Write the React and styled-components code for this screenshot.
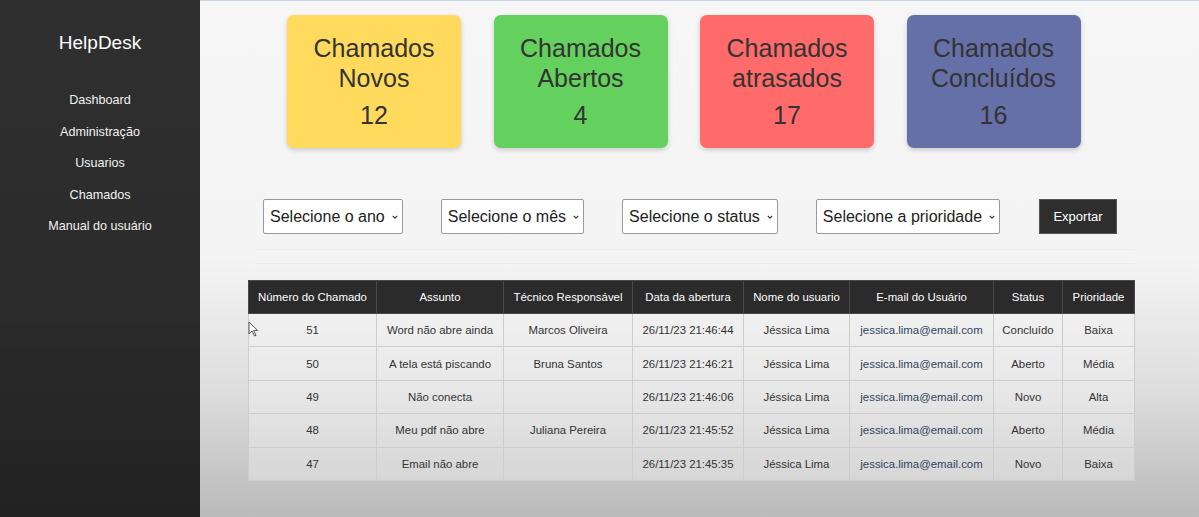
import styled, { createGlobalStyle } from 'styled-components';

const GlobalStyle = createGlobalStyle`
  html, body {
    margin: 0;
    padding: 0;
    height: 100%;
    overflow: hidden;
  }
  body {
    font-family: "Liberation Sans", Arial, sans-serif;
  }
  #root {
    height: 100%;
  }
`;

const Layout = styled.div`
  display: flex;
  height: 517px;
  width: 1199px;
`;

const Sidebar = styled.aside`
  width: 200px;
  flex-shrink: 0;
  background: linear-gradient(#2f2f2f, #2b2b2b 60%, #222222);
  display: flex;
  flex-direction: column;
  align-items: center;
  padding-top: 31px;
  box-sizing: border-box;
`;

const Brand = styled.div`
  color: #ffffff;
  font-size: 19px;
  line-height: 24px;
  margin-bottom: 37px;
`;

const Nav = styled.nav`
  display: flex;
  flex-direction: column;
  align-items: center;
  gap: 14px;
`;

const NavLink = styled.a`
  color: #f2f2f2;
  font-size: 12.6px;
  line-height: 17.5px;
  text-decoration: none;
`;

const Main = styled.main`
  flex: 1;
  position: relative;
  border-top: 1px solid #c9d5e6;
  background: linear-gradient(#f6f6f6 0%, #f4f4f4 50%, #dedede 75%, #bababa 100%);
  box-sizing: border-box;
  display: flex;
  flex-direction: column;
`;

const Cards = styled.div`
  display: flex;
  gap: 32.5px;
  padding: 14px 0 0 87px;
`;

const Card = styled.div`
  width: 174px;
  height: 133px;
  border-radius: 7px;
  background: ${(p) => p.$color};
  box-shadow: 0 2px 5px rgba(0, 0, 0, 0.18);
  color: #333333;
  display: flex;
  flex-direction: column;
  align-items: center;
  padding-top: 18px;
  box-sizing: border-box;
  text-align: center;
`;

const CardTitle = styled.div`
  font-size: 25px;
  line-height: 30px;
`;

const CardCount = styled.div`
  font-size: 25px;
  line-height: 30px;
  margin-top: 7px;
`;

const Filters = styled.div`
  display: flex;
  align-items: center;
  gap: 38px;
  padding: 51px 0 0 63px;
`;

const SelectBox = styled.div`
  height: 35px;
  box-sizing: border-box;
  border: 1px solid #9a9a9a;
  border-radius: 2px;
  background: #ffffff;
  display: flex;
  align-items: center;
  gap: 7px;
  padding: 0 4px 0 6px;
  font-size: 16px;
  color: #222222;
`;

const Chevron = styled.svg`
  width: 6px;
  height: 6px;
  margin-top: 1px;
`;

const ExportButton = styled.button`
  height: 35px;
  width: 78px;
  margin-left: 1px;
  border: 1px solid #555;
  background: #2e2e2e;
  color: #ffffff;
  font-family: inherit;
  font-size: 13px;
  padding: 0;
`;

const Divider = styled.div`
  margin: 15px 64px 0 55px;
  height: 13px;
  border-top: 1px solid rgba(0, 0, 0, 0.03);
  border-bottom: 1px solid rgba(0, 0, 0, 0.035);
`;

const Table = styled.table`
  margin: 16px 0 0 48px;
  border-collapse: collapse;
  table-layout: fixed;
  width: 886px;
  font-size: 11.4px;
`;

const Th = styled.th`
  background: #2b2b2b;
  color: #ffffff;
  font-weight: normal;
  height: 32px;
  padding: 0;
  border: 1px solid #4a4a4a;
  text-align: center;
`;

const Td = styled.td`
  height: 32.4px;
  padding: 0;
  border: 1px solid #cdcdcd;
  text-align: center;
  color: ${(p) => (p.$link ? '#2f4560' : '#333333')};
  background: rgba(255, 255, 255, 0.3);
`;

const Cursor = styled.svg`
  position: absolute;
  left: 48px;
  top: 320px;
  width: 11px;
  height: 16px;
`;

const stats = [
  { title: ['Chamados', 'Novos'], count: 12, color: '#ffda5c' },
  { title: ['Chamados', 'Abertos'], count: 4, color: '#64d05d' },
  { title: ['Chamados', 'atrasados'], count: 17, color: '#ff6a6a' },
  { title: ['Chamados', 'Concluídos'], count: 16, color: '#6670a8' },
];

const selects = [
  'Selecione o ano',
  'Selecione o mês',
  'Selecione o status',
  'Selecione a prioridade',
];

const columns = [
  { label: 'Número do Chamado', width: 128 },
  { label: 'Assunto', width: 127 },
  { label: 'Técnico Responsável', width: 129 },
  { label: 'Data da abertura', width: 111 },
  { label: 'Nome do usuario', width: 106 },
  { label: 'E-mail do Usuário', width: 144 },
  { label: 'Status', width: 69 },
  { label: 'Prioridade', width: 72 },
];

const tickets = [
  [51, 'Word não abre ainda', 'Marcos Oliveira', '26/11/23 21:46:44', 'Concluído', 'Baixa'],
  [50, 'A tela está piscando', 'Bruna Santos', '26/11/23 21:46:21', 'Aberto', 'Média'],
  [49, 'Não conecta', '', '26/11/23 21:46:06', 'Novo', 'Alta'],
  [48, 'Meu pdf não abre', 'Juliana Pereira', '26/11/23 21:45:52', 'Aberto', 'Média'],
  [47, 'Email não abre', '', '26/11/23 21:45:35', 'Novo', 'Baixa'],
];

export default function App() {
  return (
    <>
      <GlobalStyle />
      <Layout>
        <Sidebar>
          <Brand>HelpDesk</Brand>
          <Nav>
            <NavLink>Dashboard</NavLink>
            <NavLink>Administração</NavLink>
            <NavLink>Usuarios</NavLink>
            <NavLink>Chamados</NavLink>
            <NavLink>Manual do usuário</NavLink>
          </Nav>
        </Sidebar>
        <Main>
          <Cards>
            {stats.map((s) => (
              <Card key={s.title[1]} $color={s.color}>
                <CardTitle>
                  {s.title[0]}
                  <br />
                  {s.title[1]}
                </CardTitle>
                <CardCount>{s.count}</CardCount>
              </Card>
            ))}
          </Cards>

          <Filters>
            {selects.map((label) => (
              <SelectBox key={label}>
                {label}
                <Chevron viewBox="0 0 6 6">
                  <path d="M0.8 1.8 L3 4.2 L5.2 1.8" fill="none" stroke="#333" strokeWidth="1.2" />
                </Chevron>
              </SelectBox>
            ))}
            <ExportButton>Exportar</ExportButton>
          </Filters>

          <Divider />

          <Table>
            <colgroup>
              {columns.map((c) => (
                <col key={c.label} style={{ width: c.width }} />
              ))}
            </colgroup>
            <thead>
              <tr>
                {columns.map((c) => (
                  <Th key={c.label}>{c.label}</Th>
                ))}
              </tr>
            </thead>
            <tbody>
              {tickets.map(([id, subject, tech, date, status, priority]) => (
                <tr key={id}>
                  <Td>{id}</Td>
                  <Td>{subject}</Td>
                  <Td>{tech}</Td>
                  <Td>{date}</Td>
                  <Td>Jéssica Lima</Td>
                  <Td $link>jessica.lima@email.com</Td>
                  <Td>{status}</Td>
                  <Td>{priority}</Td>
                </tr>
              ))}
            </tbody>
          </Table>

          <Cursor viewBox="0 0 11 16">
            <path d="M1 1 L1 13 L4 10 L6.5 15 L8 14.3 L5.6 9.4 L9.5 9.4 Z" fill="#fff" stroke="#444" strokeWidth="0.9" strokeLinejoin="round" />
          </Cursor>
        </Main>
      </Layout>
    </>
  );
}
